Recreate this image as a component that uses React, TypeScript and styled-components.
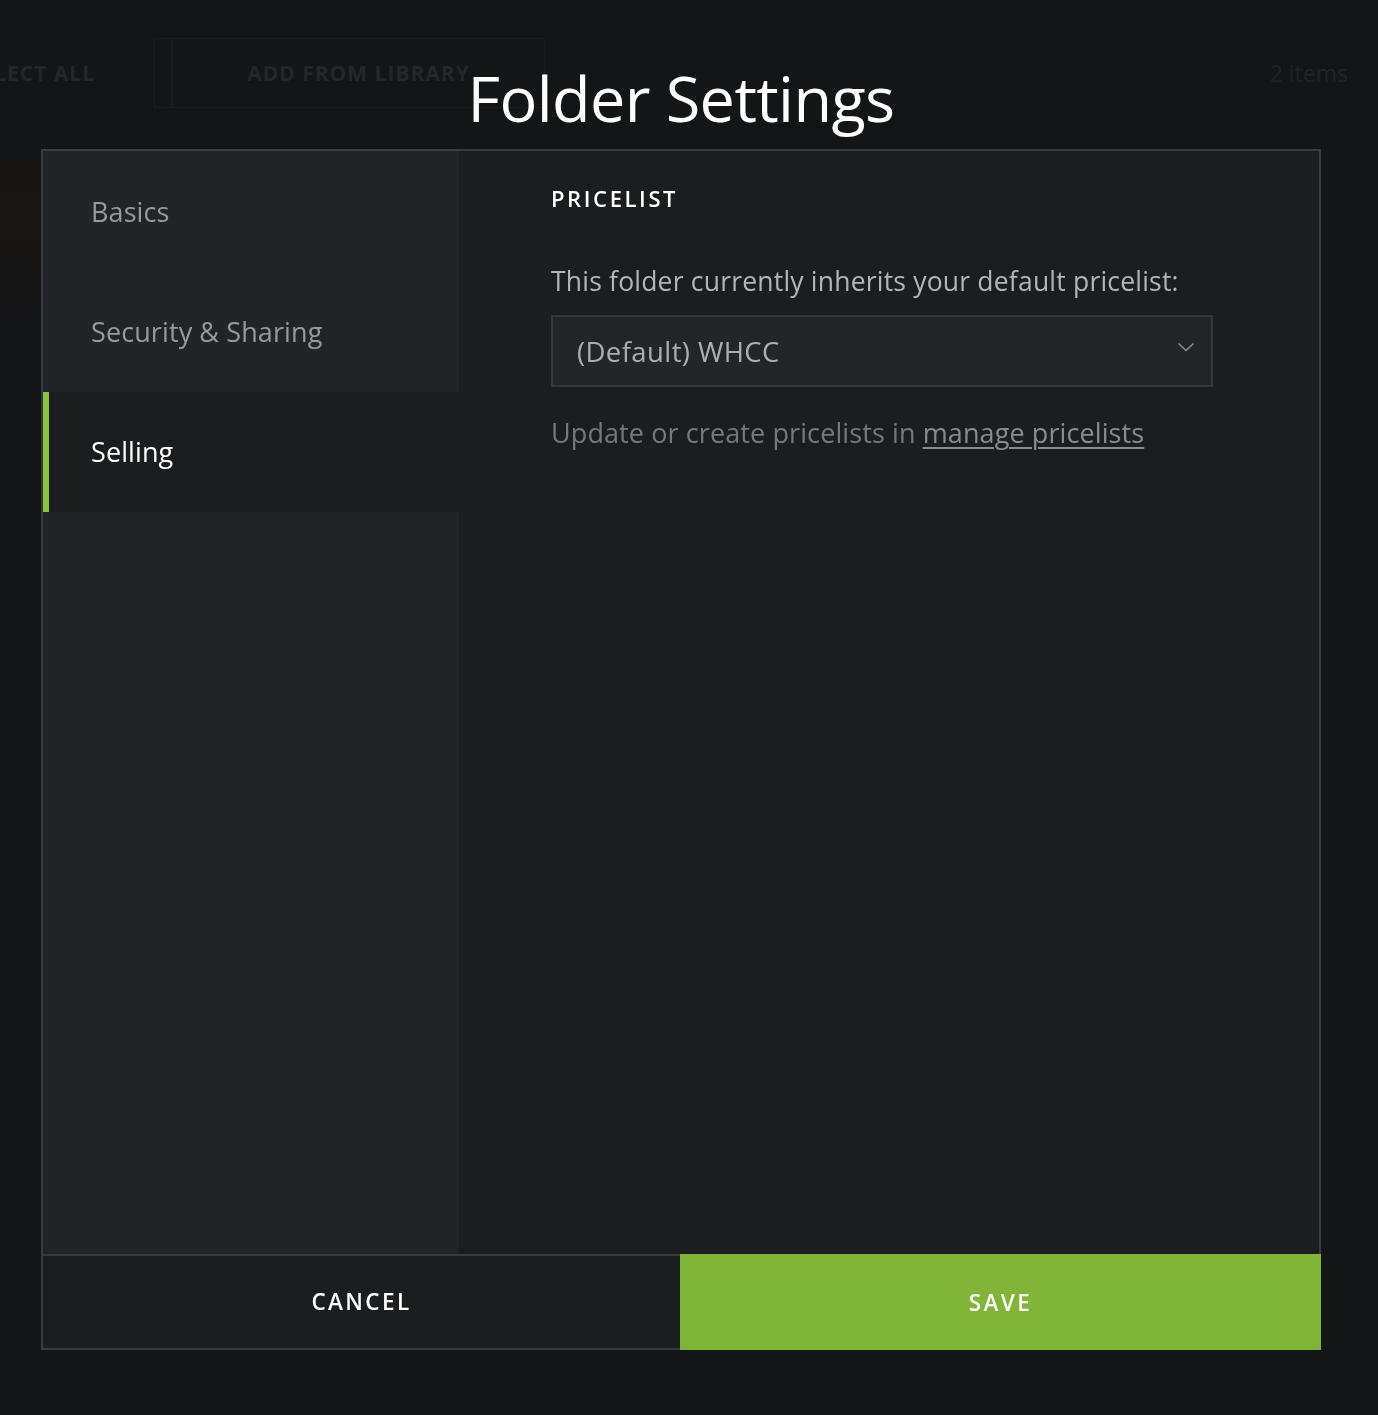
import React from 'react'
import styled, { createGlobalStyle } from 'styled-components'

const GlobalStyle = createGlobalStyle`
  html, body {
    margin: 0;
    padding: 0;
    background: #141517;
  }
  body {
    font-family: 'Open Sans', 'Noto Sans', sans-serif;
    -webkit-font-smoothing: antialiased;
  }
`

// the page behind the dialog, mostly hidden by the overlay
const Backdrop = styled.div`
  height: 1415px;
  overflow: hidden;
  background: #141517;
`

const Toolbar = styled.div`
  display: flex;
  align-items: center;
  height: 70px;
  margin-top: 38px;
  margin-left: -90px;
  padding-right: 30px;
`

const ToolbarItem = styled.div<{ $width: number; $bordered?: boolean }>`
  width: ${(p) => p.$width}px;
  height: 100%;
  display: flex;
  align-items: center;
  justify-content: center;
  box-sizing: border-box;
  border: 1px solid ${(p) => (p.$bordered ? '#1b1c1f' : 'transparent')};
  color: #252629;
  font-size: 21px;
  font-weight: 700;
  letter-spacing: 1px;
  text-transform: uppercase;
`

const ToolbarCount = styled.div`
  margin-left: auto;
  color: #222326;
  font-size: 23px;
`

const Thumb = styled.div`
  width: 40px;
  height: 150px;
  margin-top: 50px;
  background: linear-gradient(180deg, #17151399, #1a1714 40%, #151517);
`

const Overlay = styled.div`
  position: fixed;
  inset: 0;
  display: flex;
  flex-direction: column;
  align-items: center;
  padding-right: 16px;
`

const Title = styled.h1`
  margin: 58px 0 0;
  height: 91px;
  color: #ffffff;
  font-size: 63px;
  font-weight: 400;
  line-height: 80px;
  letter-spacing: -0.6px;
`

const Dialog = styled.div`
  width: 1280px;
  box-sizing: border-box;
  border: 2px solid #3a3b3f;
  background: #1c1d1f;
  display: flex;
  flex-direction: column;
`

const Body = styled.div`
  display: flex;
  height: 1103px;
`

const Sidebar = styled.nav`
  width: 416px;
  flex-shrink: 0;
  background: #232428;
  padding-top: 1px;
`

const Tab = styled.div<{ $active?: boolean }>`
  height: 120px;
  display: flex;
  align-items: center;
  box-sizing: border-box;
  padding-left: ${(p) => (p.$active ? 42 : 48)}px;
  padding-bottom: 1px;
  border-left: ${(p) => (p.$active ? '6px solid #8cc63f' : 'none')};
  background: ${(p) => (p.$active ? '#1c1d1f' : 'transparent')};
  color: ${(p) => (p.$active ? '#ffffff' : '#98999e')};
  font-size: 27px;
  letter-spacing: 0.1px;
`

const Main = styled.section`
  flex: 1;
  padding: 34px 0 0 92px;
`

const SectionLabel = styled.h2`
  margin: 0;
  color: #ffffff;
  font-size: 22px;
  font-weight: 600;
  letter-spacing: 2.6px;
  line-height: 26px;
`

const Lead = styled.p`
  margin: 53px 0 0;
  color: #b4b5b9;
  font-size: 26.5px;
  letter-spacing: 0.2px;
  line-height: 34px;
`

const Select = styled.div`
  margin-top: 17px;
  width: 662px;
  height: 72px;
  box-sizing: border-box;
  border: 2px solid #36373b;
  background: #242529;
  display: flex;
  align-items: center;
  justify-content: space-between;
  padding: 0 16px 0 24px;
  color: #adaeb2;
  font-size: 27.5px;
  letter-spacing: 0.4px;
`

const Chevron = styled.svg`
  width: 18px;
  height: 18px;
  margin-top: -8px;
`

const Hint = styled.p`
  margin: 29px 0 0;
  color: #77787c;
  font-size: 27px;
  letter-spacing: 0.1px;
  line-height: 34px;
`

const HintLink = styled.a`
  color: #8a8b8f;
  text-decoration: underline;
  text-underline-offset: 4px;
  text-decoration-thickness: 1.5px;
`

const Footer = styled.div`
  display: grid;
  grid-template-columns: 637px 1fr;
  height: 94px;
`

const FooterButton = styled.button<{ $primary?: boolean }>`
  border: none;
  border-top: 2px solid #3a3b3f;
  margin: ${(p) => (p.$primary ? '0 -2px -2px 0' : '0')};
  height: ${(p) => (p.$primary ? '96px' : '94px')};
  border-top-color: ${(p) => (p.$primary ? '#80b537' : '#3a3b3f')};
  background: ${(p) => (p.$primary ? '#80b537' : '#1c1d1f')};
  color: #ffffff;
  font-family: inherit;
  font-size: 22.5px;
  font-weight: 600;
  letter-spacing: 2.4px;
  padding: 0 0 2px;
  cursor: pointer;
`

const tabs = ['Basics', 'Security & Sharing', 'Selling']

export default function App() {
  return (
    <>
      <GlobalStyle />
      <Backdrop>
        <Toolbar>
          <ToolbarItem $width={244}>Select all</ToolbarItem>
          <ToolbarItem $width={18} $bordered />
          <ToolbarItem $width={373} $bordered>
            Add from library
          </ToolbarItem>
          <ToolbarCount>2 items</ToolbarCount>
        </Toolbar>
        <Thumb />
      </Backdrop>

      <Overlay>
        <Title>Folder Settings</Title>
        <Dialog>
          <Body>
            <Sidebar>
              {tabs.map((t) => (
                <Tab key={t} $active={t === 'Selling'}>
                  {t}
                </Tab>
              ))}
            </Sidebar>
            <Main>
              <SectionLabel>PRICELIST</SectionLabel>
              <Lead>This folder currently inherits your default pricelist:</Lead>
              <Select>
                <span>(Default) WHCC</span>
                <Chevron viewBox="0 0 18 18" fill="none">
                  <path d="M1.5 5.5 L9 12.5 L16.5 5.5" stroke="#8b8c90" strokeWidth="1.6" />
                </Chevron>
              </Select>
              <Hint>
                Update or create pricelists in <HintLink>manage pricelists</HintLink>
              </Hint>
            </Main>
          </Body>
          <Footer>
            <FooterButton>CANCEL</FooterButton>
            <FooterButton $primary>SAVE</FooterButton>
          </Footer>
        </Dialog>
      </Overlay>
    </>
  )
}
